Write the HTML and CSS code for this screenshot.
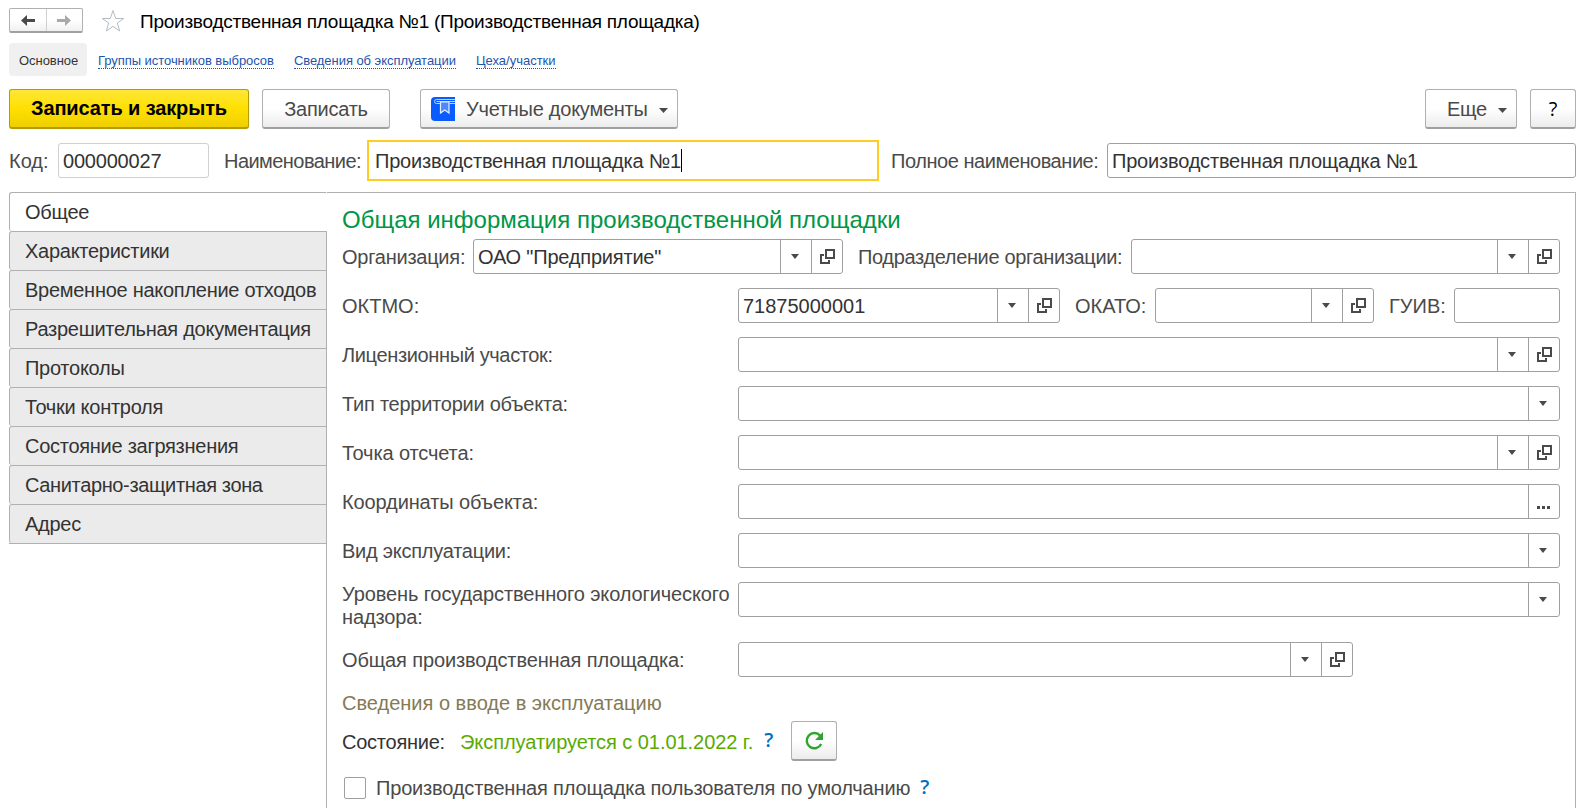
FILE: index.html
```html
<!DOCTYPE html>
<html lang="ru">
<head>
    <meta charset="UTF-8">
    <meta name="viewport" content="width=device-width, initial-scale=1.0">
    <title>Производственная площадка №1</title>
    <link rel="stylesheet" href="styles.css">
</head>
<body>
    <!-- Shared icons -->
    <svg class="sprite">
        <symbol id="icon-open" viewBox="0 0 15 15">
            <path d="M6 1h8v8H6z M4 6H1v8h8v-3" fill="none" stroke="#4a4a4a" stroke-width="2"/>
        </symbol>
        <symbol id="icon-drop" viewBox="0 0 8 5">
            <path d="M0 0h8L4 5z" fill="#4a4a4a"/>
        </symbol>
    </svg>

    <!-- Title bar -->
    <div class="title-bar">
        <div class="history">
            <div class="history-btn"><svg width="14" height="11" viewBox="0 0 14 11"><path d="M0 5.500L6 0v4h8v3H6v4z" fill="#4a4a4a"/></svg></div>
            <div class="history-btn"><svg width="14" height="11" viewBox="0 0 14 11"><path d="M14 5.500L8 0v4H0v3h8v4z" fill="#a9a9a9"/></svg></div>
        </div>
        <svg class="star" width="24" height="22" viewBox="0 0 24 22"><path d="M12 .5l2.700 8h8L16.300 13l2.400 8L12 16.300 5.300 21l2.400-8L1.300 8.500h8z" fill="none" stroke="#b4bcc4"/></svg>
        <div class="title">Производственная площадка №1 (Производственная площадка)</div>
    </div>

    <!-- Section links -->
    <div class="nav">
        <span class="nav-current">Основное</span>
        <a class="nav-link">Группы источников выбросов</a>
        <a class="nav-link">Сведения об эксплуатации</a>
        <a class="nav-link digits">Цеха/участки</a>
    </div>

    <!-- Command bar -->
    <div class="commands">
        <div class="btn btn-main">Записать и закрыть</div>
        <div class="btn btn-save">Записать</div>
        <div class="btn btn-docs">
            <svg width="24" height="24" viewBox="0 0 24 24">
                <path d="M4 0h20v24H4a4 4 0 0 1-4-4V4a4 4 0 0 1 4-4z" fill="#0a5cff"/>
                <path d="M24 2.500H5.500a1.800 1.800 0 0 0 0 4H9M18.500 6.500H24M5.500 4.500H24" fill="none" stroke="#b9d2ff"/>
                <path d="M9.500 5v11l4.250-3 4.250 3V5z" fill="#4d88ff" stroke="#e6efff" stroke-width="1.200"/>
            </svg>
            <span>Учетные документы</span>
            <svg class="drop" width="9" height="5" viewBox="0 0 9 5"><path d="M0 0h9L4.500 5z" fill="#4a4a4a"/></svg>
        </div>
        <div class="btn btn-more"><span>Еще</span><svg class="drop" width="9" height="5" viewBox="0 0 9 5"><path d="M0 0h9L4.500 5z" fill="#4a4a4a"/></svg></div>
        <div class="btn btn-help">?</div>
    </div>

    <!-- Header fields -->
    <div class="header-fields">
        <div class="label label-code">Код:</div>
        <div class="field field-code"><span class="value">000000027</span></div>
        <div class="label label-name">Наименование:</div>
        <div class="field field-name"><span class="value">Производственная площадка №1</span><span class="caret"></span></div>
        <div class="label label-full">Полное наименование:</div>
        <div class="field field-full"><span class="value">Производственная площадка №1</span></div>
    </div>

    <div class="pages">
        <!-- Page tabs -->
        <div class="tabs">
            <div class="tab active">Общее</div>
            <div class="tab">Характеристики</div>
            <div class="tab">Временное накопление отходов</div>
            <div class="tab">Разрешительная документация</div>
            <div class="tab">Протоколы</div>
            <div class="tab">Точки контроля</div>
            <div class="tab">Состояние загрязнения</div>
            <div class="tab tight">Санитарно-защитная зона</div>
            <div class="tab">Адрес</div>
            <div class="tabs-rest"></div>
        </div>

        <!-- General page -->
        <div class="page">
            <div class="page-title">Общая информация производственной площадки</div>

            <div class="row">
                <div class="label label-org">Организация:</div>
                <div class="field field-org">
                    <span class="value">ОАО "Предприятие"</span>
                    <div class="pick pick-drop"><svg width="8" height="5"><use href="#icon-drop"/></svg></div>
                    <div class="pick"><svg width="15" height="15"><use href="#icon-open"/></svg></div>
                </div>
                <div class="label label-dept">Подразделение организации:</div>
                <div class="field grow">
                    <span class="value"></span>
                    <div class="pick pick-drop"><svg width="8" height="5"><use href="#icon-drop"/></svg></div>
                    <div class="pick"><svg width="15" height="15"><use href="#icon-open"/></svg></div>
                </div>
            </div>

            <div class="row">
                <div class="label label-wide digits">ОКТМО:</div>
                <div class="field field-oktmo">
                    <span class="value digits">71875000001</span>
                    <div class="pick pick-drop"><svg width="8" height="5"><use href="#icon-drop"/></svg></div>
                    <div class="pick"><svg width="15" height="15"><use href="#icon-open"/></svg></div>
                </div>
                <div class="label label-okato digits">ОКАТО:</div>
                <div class="field field-okato">
                    <span class="value"></span>
                    <div class="pick pick-drop"><svg width="8" height="5"><use href="#icon-drop"/></svg></div>
                    <div class="pick"><svg width="15" height="15"><use href="#icon-open"/></svg></div>
                </div>
                <div class="label label-guiv digits">ГУИВ:</div>
                <div class="field grow"></div>
            </div>

            <div class="row">
                <div class="label label-wide tight">Лицензионный участок:</div>
                <div class="field grow">
                    <span class="value"></span>
                    <div class="pick pick-drop"><svg width="8" height="5"><use href="#icon-drop"/></svg></div>
                    <div class="pick"><svg width="15" height="15"><use href="#icon-open"/></svg></div>
                </div>
            </div>

            <div class="row">
                <div class="label label-wide">Тип территории объекта:</div>
                <div class="field grow">
                    <span class="value"></span>
                    <div class="pick pick-drop"><svg width="8" height="5"><use href="#icon-drop"/></svg></div>
                </div>
            </div>

            <div class="row">
                <div class="label label-wide loose">Точка отсчета:</div>
                <div class="field grow">
                    <span class="value"></span>
                    <div class="pick pick-drop"><svg width="8" height="5"><use href="#icon-drop"/></svg></div>
                    <div class="pick"><svg width="15" height="15"><use href="#icon-open"/></svg></div>
                </div>
            </div>

            <div class="row">
                <div class="label label-wide loose">Координаты объекта:</div>
                <div class="field grow">
                    <span class="value"></span>
                    <div class="pick pick-drop"><svg class="dots" width="13" height="3"><path d="M0 0h3v3H0zM5 0h3v3H5zM10 0h3v3h-3z" fill="#4a4a4a"/></svg></div>
                </div>
            </div>

            <div class="row">
                <div class="label label-wide">Вид эксплуатации:</div>
                <div class="field grow">
                    <span class="value"></span>
                    <div class="pick pick-drop"><svg width="8" height="5"><use href="#icon-drop"/></svg></div>
                </div>
            </div>

            <div class="row row-tall">
                <div class="label label-wide label-two loose">Уровень государственного экологического надзора:</div>
                <div class="field grow">
                    <span class="value"></span>
                    <div class="pick pick-drop"><svg width="8" height="5"><use href="#icon-drop"/></svg></div>
                </div>
            </div>

            <div class="row">
                <div class="label label-wide loose">Общая производственная площадка:</div>
                <div class="field field-common">
                    <span class="value"></span>
                    <div class="pick pick-drop"><svg width="8" height="5"><use href="#icon-drop"/></svg></div>
                    <div class="pick"><svg width="15" height="15"><use href="#icon-open"/></svg></div>
                </div>
            </div>

            <div class="group-title">Сведения о вводе в эксплуатацию</div>

            <div class="state">
                <span class="state-label">Состояние:</span>
                <span class="state-value">Эксплуатируется с 01.01.2022 г.</span>
                <span class="hint">?</span>
                <div class="btn btn-refresh">
                    <svg width="20" height="20" viewBox="0 0 20 20">
                        <path d="M16.200 4.800A7.600 7.600 0 1 0 17.200 13" fill="none" stroke="#2fa52f" stroke-width="2.400"/>
                        <path d="M19 1v8h-8z" fill="#2fa52f"/>
                    </svg>
                </div>
            </div>

            <div class="default-row">
                <span class="checkbox"></span>
                <span class="default-label">Производственная площадка пользователя по умолчанию</span>
                <span class="hint">?</span>
            </div>
        </div>
    </div>
</body>
</html>
```
FILE: styles.css
```css
/* Basic Styling */
* { box-sizing: border-box; }
body {
    margin: 0;
    padding: 8px 5px 0 9px;
    height: 808px;
    overflow: hidden;
    display: flex;
    flex-direction: column;
    background-color: #fff;
    color: #4a4a4a;
    font-family: "Liberation Sans", Arial, sans-serif;
    font-size: 20px;
    line-height: 24px;
    letter-spacing: -0.25px;
    white-space: nowrap;
}
svg { display: block; flex: none; }
.sprite { position: absolute; width: 0; height: 0; }
/* Title bar */
.title-bar { display: flex; flex: none; height: 26px; }
.history {
    display: flex;
    width: 74px;
    height: 25px;
    border: 1px solid #b0b0b0;
    border-bottom: 2px solid #a0a0a0;
    border-radius: 2px;
    background: linear-gradient(#fff 50%, #f0f0f0);
}
.history-btn { flex: 1; display: flex; align-items: center; justify-content: center; }
.history-btn + .history-btn { border-left: 1px solid #d0d0d0; }
.star { margin: 2px 0 0 17.5px; }
.title { margin: 2px 0 0 15.5px; color: #000; font-size: 19px; }
/* Section links */
.nav {
    display: flex;
    flex: none;
    margin-top: 9px;
    height: 33px;
    font-size: 13px;
    line-height: 15px;
    letter-spacing: -0.05px;
}
.nav-current {
    width: 78px;
    padding: 10px 0 0 10px;
    margin-right: 11px;
    background-color: #f0f0f0;
    border-radius: 4px;
    color: #333;
}
.nav-link {
    height: 16px;
    margin: 10px 20px 0 0;
    border-bottom: 1px dotted #1c55ae;
    color: #1c55ae;
}
/* Command bar */
.commands { display: flex; flex: none; margin-top: 13px; height: 40px; }
.btn {
    display: flex;
    align-items: center;
    justify-content: center;
    height: 40px;
    border: 1px solid #b0b0b0;
    border-bottom: 2px solid #a0a0a0;
    border-radius: 3px;
    background: linear-gradient(#fff 50%, #ececec);
}
.btn-main {
    width: 240px;
    padding-bottom: 2px;
    border-color: #b39b00;
    background: linear-gradient(#ffe738, #ffe000 50%, #efd000);
    color: #000;
    font-weight: bold;
    letter-spacing: -0.12px;
}
.btn-save { width: 128px; margin-left: 13px; }
.btn-docs { width: 258px; margin-left: 30px; justify-content: flex-start; padding-left: 10px; }
.btn-docs span { margin-left: 11px; letter-spacing: -0.25px; }
.drop { margin: 3px 0 0 11px; }
.btn-more { width: 92px; margin-left: auto; padding-left: 12px; }
.btn-help { width: 46px; margin-left: 13px; color: #000; font-family: "Open Sans", sans-serif; }
/* Fields */
.label { height: 35px; line-height: 37px; }
.field {
    display: flex;
    height: 35px;
    border: 1px solid #a0a0a0;
    border-radius: 3px;
    color: #333;
    line-height: 35px;
}
.value { flex: 1; padding-left: 4px; letter-spacing: -0.2px; }
.pick {
    width: 31px;
    display: flex;
    align-items: center;
    justify-content: center;
    border-left: 1px solid #a0a0a0;
}
.pick-drop { padding-right: 2px; }
.dots { margin-top: 11px; }
.grow { flex: 1; }
.header-fields { display: flex; flex: none; align-items: center; margin-top: 11px; height: 41px; }
.label-code { width: 49px; letter-spacing: 0; }
.field-code { width: 151px; border-color: #d0d0d0; }
.label-name { width: 143px; margin-left: 15px; letter-spacing: -0.55px; }
.field-name { width: 512px; height: 41px; border: 2px solid #fc2; border-radius: 0; line-height: 39px; }
.field-name .value { flex: none; padding-left: 6px; }
.caret { width: 1px; height: 23px; margin-top: 7px; background-color: #000; }
.label-full { width: 216px; margin-left: 12px; letter-spacing: -0.45px; }
.field-full { flex: 1; }
/* Page tabs */
.pages { display: flex; flex: 1; min-height: 0; margin-top: 11px; }
.tabs { display: flex; flex-direction: column; width: 318px; }
.tab {
    flex: none;
    height: 39px;
    padding-left: 15px;
    border: 1px solid #b0b0b0;
    border-bottom: 0;
    border-radius: 3px 0 0 3px;
    background-color: #ebebeb;
    color: #333;
    line-height: 38px;
    letter-spacing: -0.27px;
}
.tab.active { border-right-color: #fff; background-color: #fff; }
.tabs-rest { flex: 1; border-top: 1px solid #b0b0b0; border-right: 1px solid #b0b0b0; }
/* General page */
.page {
    flex: 1;
    padding: 12px 15px 0 15px;
    border-top: 1px solid #b0b0b0;
    border-right: 1px solid #b0b0b0;
}
.page-title { height: 34px; color: #009646; font-size: 24px; line-height: 30px; letter-spacing: 0; }
.row { display: flex; height: 35px; margin-bottom: 14px; }
.row-tall { margin-bottom: 25px; }
.label-org { width: 131px; }
.field-org { width: 370px; }
.label-dept { width: 273px; margin-left: 15px; letter-spacing: -0.35px; }
.label-wide { width: 396px; }
.field-oktmo { width: 322px; }
.label-okato { width: 80px; margin-left: 15px; }
.field-okato { width: 219px; }
.label-guiv { width: 65px; margin-left: 15px; }
.label-two { padding-top: 1px; line-height: 23px; white-space: normal; }
.field-common { width: 615px; }
.group-title { height: 31px; margin-top: -1px; color: #857a55; line-height: 26px; letter-spacing: 0; }
.state { display: flex; align-items: center; height: 40px; }
.state-label { width: 118px; padding-top: 2px; color: #333; }
.state-value { padding-top: 2px; color: #5aaa00; letter-spacing: -0.05px; }
.hint {
    margin: -2px 0 0 10px;
    color: #0070c0;
    font-family: "Open Sans", sans-serif;
    font-weight: 600;
}
.state .hint { margin-left: 11px; }
.btn-refresh { width: 46px; margin-left: 18px; }
.default-row { display: flex; align-items: center; margin-top: 15px; }
.default-label { letter-spacing: -0.17px; }
.checkbox { width: 22px; height: 22px; margin: 0 10px 0 2px; border: 1px solid #a0a0a0; border-radius: 2px; }
/* Text spacing */
.digits { letter-spacing: 0; }
.loose { letter-spacing: -0.12px; }
.tight { letter-spacing: -0.36px; }
```
